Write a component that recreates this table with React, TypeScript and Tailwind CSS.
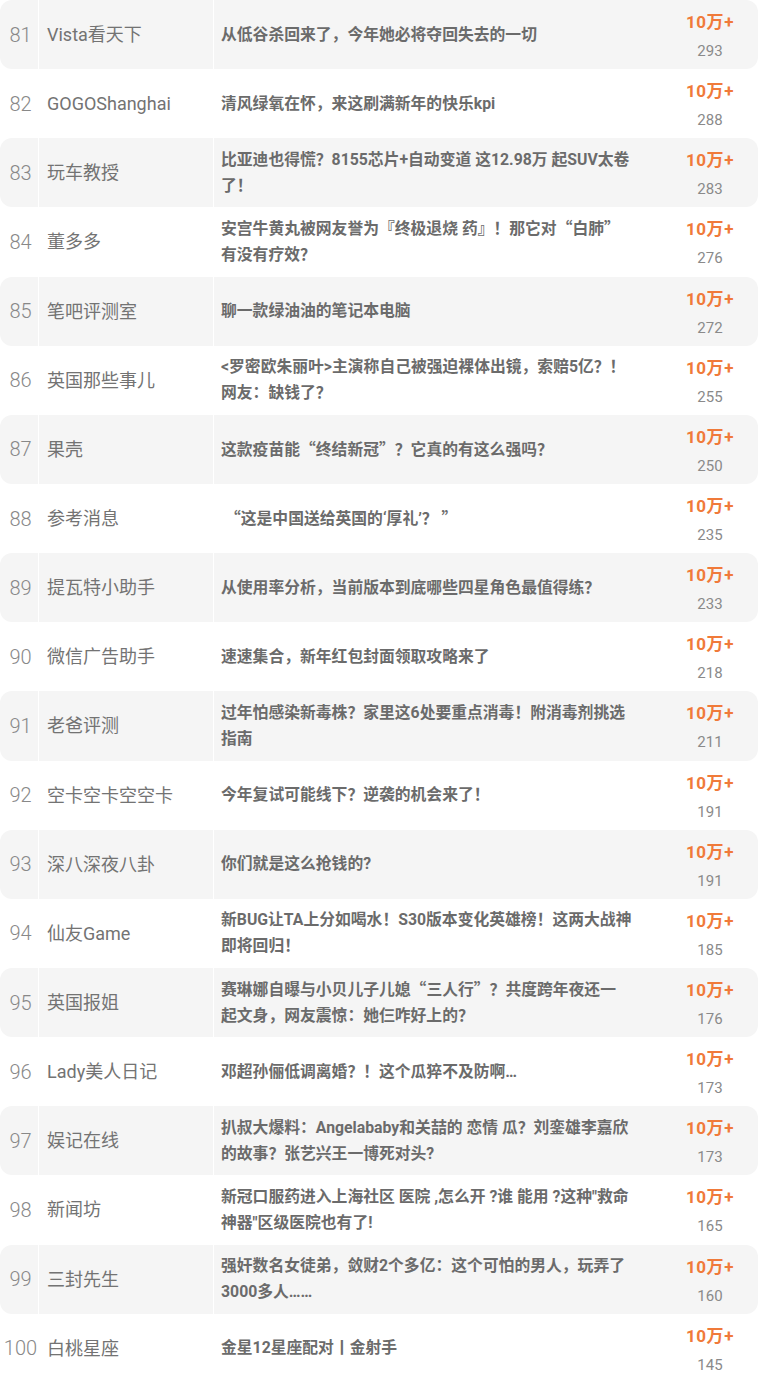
import React from "react";

type Row = { n: number; name: string; title: string[]; count: number };

const rows: Row[] = [
  { n: 81, name: "Vista看天下", title: ["从低谷杀回来了，今年她必将夺回失去的一切"], count: 293 },
  { n: 82, name: "GOGOShanghai", title: ["清风绿氧在怀，来这刷满新年的快乐kpi"], count: 288 },
  { n: 83, name: "玩车教授", title: ["比亚迪也得慌？8155芯片+自动变道 这12.98万 起SUV太卷", "了！"], count: 283 },
  { n: 84, name: "董多多", title: ["安宫牛黄丸被网友誉为『终极退烧 药』！那它对“白肺”", "有没有疗效？"], count: 276 },
  { n: 85, name: "笔吧评测室", title: ["聊一款绿油油的笔记本电脑"], count: 272 },
  { n: 86, name: "英国那些事儿", title: ["<罗密欧朱丽叶>主演称自己被强迫裸体出镜，索赔5亿？！", "网友：缺钱了？"], count: 255 },
  { n: 87, name: "果壳", title: ["这款疫苗能“终结新冠”？它真的有这么强吗？"], count: 250 },
  { n: 88, name: "参考消息", title: ["\u00a0“这是中国送给英国的‘厚礼’？ ”"], count: 235 },
  { n: 89, name: "提瓦特小助手", title: ["从使用率分析，当前版本到底哪些四星角色最值得练？"], count: 233 },
  { n: 90, name: "微信广告助手", title: ["速速集合，新年红包封面领取攻略来了"], count: 218 },
  { n: 91, name: "老爸评测", title: ["过年怕感染新毒株？家里这6处要重点消毒！附消毒剂挑选", "指南"], count: 211 },
  { n: 92, name: "空卡空卡空空卡", title: ["今年复试可能线下？逆袭的机会来了！"], count: 191 },
  { n: 93, name: "深八深夜八卦", title: ["你们就是这么抢钱的?"], count: 191 },
  { n: 94, name: "仙友Game", title: ["新BUG让TA上分如喝水！S30版本变化英雄榜！这两大战神", "即将回归！"], count: 185 },
  { n: 95, name: "英国报姐", title: ["赛琳娜自曝与小贝儿子儿媳“三人行”？共度跨年夜还一", "起文身，网友震惊：她仨咋好上的？"], count: 176 },
  { n: 96, name: "Lady美人日记", title: ["邓超孙俪低调离婚？！这个瓜猝不及防啊…"], count: 173 },
  { n: 97, name: "娱记在线", title: ["扒叔大爆料：Angelababy和关喆的 恋情 瓜？刘銮雄李嘉欣", "的故事？张艺兴王一博死对头?"], count: 173 },
  { n: 98, name: "新闻坊", title: ["新冠口服药进入上海社区 医院 ,怎么开 ?谁 能用 ?这种\"救命", "神器\"区级医院也有了!"], count: 165 },
  { n: 99, name: "三封先生", title: ["强奸数名女徒弟，敛财2个多亿：这个可怕的男人，玩弄了", "3000多人……"], count: 160 },
  { n: 100, name: "白桃星座", title: ["金星12星座配对丨金射手"], count: 145 },
];

function Title({ text }: { text: string }) {
  const parts = text.split(/([“”])/);
  return (
    <>
      {parts.map((p, i) =>
        p === "“" || p === "”" ? (
          <span
            key={i}
            className={`inline-block w-[1em] ${p === "“" ? "text-right" : "text-left"}`}
            style={{ fontFamily: '"Noto Sans CJK SC", sans-serif' }}
          >
            {p}
          </span>
        ) : (
          <React.Fragment key={i}>{p}</React.Fragment>
        )
      )}
    </>
  );
}

export default function App() {
  return (
    <div
      className="w-[758px] bg-white"
      style={{ fontFamily: 'Roboto, "Noto Sans CJK SC", sans-serif' }}
    >
      {rows.map((r, i) => (
        <div
          key={r.n}
          className={`flex h-[69.15px] rounded-xl ${i % 2 === 0 ? "bg-[#f5f5f5]" : "bg-white"}`}
        >
          <div className="w-[39px] shrink-0 border-r border-white flex items-center justify-center">
            <span className="text-[20px] font-light text-[#888888] leading-none whitespace-nowrap pl-[3px]">
              {r.n}
            </span>
          </div>
          <div className="w-[175px] shrink-0 border-r border-white flex items-center pl-[8px]">
            <span className="text-[18px] text-[#737373] whitespace-nowrap">{r.name}</span>
          </div>
          <div className="flex-1 flex flex-col justify-center pl-[7px]">
            {r.title.map((t, k) => (
              <div
                key={k}
                className="text-[15.8px] font-bold leading-[26px] text-[#6b6b6b] whitespace-nowrap"
              >
                <Title text={t} />
              </div>
            ))}
          </div>
          <div className="w-[98px] shrink-0 flex flex-col items-center justify-center pl-[2px] pt-[5px]">
            <div className="text-[17px] font-bold leading-[29px] tracking-[0.6px] text-[#f07a3a]">10万+</div>
            <div className="text-[15px] leading-[29px] text-[#8a8a8a]">{r.count}</div>
          </div>
        </div>
      ))}
    </div>
  );
}
